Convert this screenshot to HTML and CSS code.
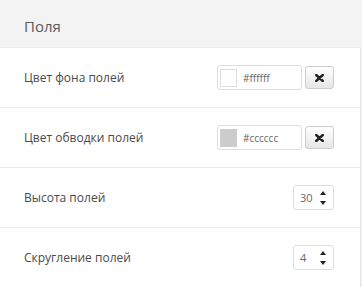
FILE: index.html
```html
<!DOCTYPE html>
<html lang="ru">
<head>
    <meta charset="UTF-8">
    <title>Поля</title>
    <link rel="stylesheet" href="styles.css">
</head>
<body>
    <div class="panel-header">Поля</div>
    <div class="panel">
        <div class="row">
            <span class="label">Цвет фона полей</span>
            <div class="controls">
                <div class="color-input">
                    <span class="swatch"></span>
                    <span class="hex">#ffffff</span>
                </div>
                <button class="clear-button">
                    <svg width="9" height="8" viewBox="0 0 9 8"><path d="M1.2 1 L7.8 7 M7.8 1 L1.2 7" stroke="#222" stroke-width="2.4" stroke-linecap="round"/></svg>
                </button>
            </div>
        </div>
        <div class="row">
            <span class="label">Цвет обводки полей</span>
            <div class="controls">
                <div class="color-input">
                    <span class="swatch swatch-grey"></span>
                    <span class="hex">#cccccc</span>
                </div>
                <button class="clear-button">
                    <svg width="9" height="8" viewBox="0 0 9 8"><path d="M1.2 1 L7.8 7 M7.8 1 L1.2 7" stroke="#222" stroke-width="2.4" stroke-linecap="round"/></svg>
                </button>
            </div>
        </div>
        <div class="row">
            <span class="label">Высота полей</span>
            <div class="number-input">
                <span class="num">30</span>
                <span class="spin"><i class="up"></i><i class="down"></i></span>
            </div>
        </div>
        <div class="row">
            <span class="label">Скругление полей</span>
            <div class="number-input">
                <span class="num">4</span>
                <span class="spin"><i class="up"></i><i class="down"></i></span>
            </div>
        </div>
    </div>
</body>
</html>
```

FILE: styles.css
```css
body {
    margin: 0;
    font-family: "Open Sans", "Liberation Sans", sans-serif;
    background-color: #f3f3f3;
}
.panel-header {
    height: 47px;
    line-height: 52px;
    padding-left: 24px;
    font-size: 15px;
    color: #5a5a5a;
    background-color: #f3f3f3;
    border-bottom: 1px solid #e8eeee;
}
.panel {
    width: 360px;
    background-color: white;
    border-right: 1px solid #e6e6e6;
    height: 240px;
}
.row {
    height: 59px;
    display: flex;
    align-items: center;
    justify-content: space-between;
    padding: 0 26px 0 24px;
    border-bottom: 1px solid #e8ecec;
}
.row:last-child {
    border-bottom: none;
}
.label {
    font-size: 12px;
    color: #4a4a4a;
}
.controls {
    display: flex;
    align-items: center;
    gap: 3px;
}
.color-input {
    width: 81px;
    height: 23px;
    border: 1px solid #ddd;
    border-radius: 3px;
    display: flex;
    align-items: center;
    padding-left: 2px;
    box-sizing: content-box;
}
.swatch {
    width: 15px;
    height: 16px;
    border: 1px solid #ddd;
    background-color: #fff;
}
.swatch-grey {
    background-color: #cccccc;
    border-color: #cccccc;
}
.hex {
    margin-left: 6px;
    font-size: 10px;
    color: #666;
}
.clear-button {
    width: 29px;
    height: 23px;
    padding: 0;
    border: 1px solid #ccc;
    border-radius: 3px;
    background: linear-gradient(#ffffff, #e6e6e6);
    display: flex;
    align-items: center;
    justify-content: center;
    cursor: pointer;
}
.number-input {
    width: 41px;
    height: 25px;
    border: 1px solid #ddd;
    border-radius: 3px;
    display: flex;
    align-items: center;
    justify-content: space-between;
    padding: 0 7px 0 6px;
    box-sizing: border-box;
}
.num {
    font-size: 11px;
    color: #666;
}
.spin {
    display: flex;
    flex-direction: column;
    gap: 6px;
}
.spin i {
    width: 0;
    height: 0;
    border-left: 3px solid transparent;
    border-right: 3px solid transparent;
}
.spin .up {
    border-bottom: 4px solid #222;
}
.spin .down {
    border-top: 4px solid #222;
}
```
